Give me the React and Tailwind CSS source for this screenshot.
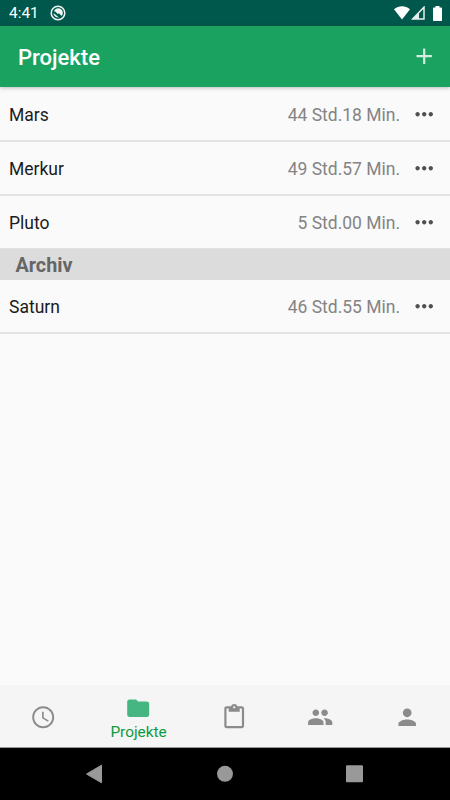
const ICONS = {
  clock:
    'M11.99 2C6.47 2 2 6.48 2 12s4.47 10 9.99 10C17.52 22 22 17.52 22 12S17.52 2 11.99 2zM12 20.200c-4.500 0-8.200-3.700-8.200-8.200s3.700-8.200 8.200-8.200 8.200 3.700 8.200 8.200-3.700 8.200-8.200 8.200zM12.500 7H11v6l5.250 3.150.75-1.230-4.500-2.670z',
  folder:
    'M10 4H4c-1.1 0-1.99.9-1.99 2L2 18c0 1.1.9 2 2 2h16c1.1 0 2-.9 2-2V8c0-1.1-.9-2-2-2h-8l-2-2z',
  clipboard:
    'M19 2h-4.18C14.4.84 13.3 0 12 0c-1.3 0-2.4.84-2.82 2H5c-1.1 0-2 .9-2 2v16c0 1.1.9 2 2 2h14c1.1 0 2-.9 2-2V4c0-1.1-.9-2-2-2zm-7 0c.55 0 1 .45 1 1s-.45 1-1 1-1-.45-1-1 .45-1 1-1zm7 18H5V4h2v3h10V4h2v16z',
  people:
    'M16 11c1.66 0 2.99-1.34 2.99-3S17.66 5 16 5c-1.66 0-3 1.34-3 3s1.34 3 3 3zm-8 0c1.66 0 2.99-1.34 2.99-3S9.66 5 8 5C6.34 5 5 6.34 5 8s1.34 3 3 3zm0 2c-2.33 0-7 1.17-7 3.5V19h14v-2.5c0-2.33-4.67-3.5-7-3.5zm8 0c-.29 0-.62.02-.97.05 1.16.84 1.97 1.97 1.97 3.45V19h6v-2.5c0-2.33-4.67-3.5-7-3.5z',
  person:
    'M12 12c2.21 0 4-1.79 4-4s-1.79-4-4-4-4 1.79-4 4 1.79 4 4 4zm0 2c-2.67 0-8 1.34-8 4v2h16v-2c0-2.66-5.33-4-8-4z',
  add: 'M19 13h-6v6h-2v-6H5v-2h6V5h2v6h6v2z',
  more: 'M6 10c-1.1 0-2 .9-2 2s.9 2 2 2 2-.9 2-2-.9-2-2-2zm12 0c-1.1 0-2 .9-2 2s.9 2 2 2 2-.9 2-2-.9-2-2-2zm-6 0c-1.1 0-2 .9-2 2s.9 2 2 2 2-.9 2-2-.9-2-2-2z',
}

const projects = [
  { name: 'Mars', time: '44 Std.18 Min.' },
  { name: 'Merkur', time: '49 Std.57 Min.' },
  { name: 'Pluto', time: '5 Std.00 Min.' },
]

const archived = [{ name: 'Saturn', time: '46 Std.55 Min.' }]

function Icon({ name, className = '' }) {
  return (
    <svg viewBox="0 0 24 24" fill="currentColor" className={`size-[26.4px] shrink-0 ${className}`}>
      <path d={ICONS[name]} />
    </svg>
  )
}

function StatusBar() {
  return (
    <div className="flex h-[26px] shrink-0 items-center bg-[#00574b] pr-[8px] pl-[9px] text-white">
      <span className="pt-[2px] text-[15.4px] leading-none">4:41</span>
      <svg viewBox="0 0 16 16" className="ml-[11.5px] size-4" fill="none">
        <circle cx="8" cy="8" r="6.8" stroke="#f2f7f6" strokeWidth="1.5" />
        <path d="M4 6.2A4.6 4.6 0 1 1 11.6 11L9.2 8.5 7.4 8.8 5.600 6.700z" fill="#f2f7f6" />
        <path d="M3.5 8.1 8.9 12.5A4.6 4.6 0 0 1 3.5 8.1z" fill="#f2f7f6" />
      </svg>
      <div className="ml-auto flex items-center">
        <svg viewBox="0 0 16 14" className="h-[14px] w-4" fill="#fff">
          <path d="M0 3.2C4.5-.7 11.5-.7 16 3.2L8 13.4z" />
        </svg>
        <svg viewBox="0 0 14 14" className="ml-[1px] h-[14px] w-[14px]">
          <path d="M1.6 13.1 13 1.2v11.9z" fill="none" stroke="#e5efed" strokeWidth="1.5" />
          <path d="M8 6.5V13H1.6z" fill="#e5efed" />
        </svg>
        <svg viewBox="0 0 9 15" className="ml-[8px] h-[15px] w-[9px]" fill="#fff">
          <path d="M2.5 0h4v1.5H8.2a.8.8 0 0 1 .8.8v11.9a.8.8 0 0 1-.8.8H.8a.8.8 0 0 1-.8-.8V2.3a.8.8 0 0 1 .8-.8h1.7z" />
        </svg>
      </div>
    </div>
  )
}

function ProjectRow({ name, time }) {
  return (
    <li className="flex h-[54px] items-center border-b-2 border-[#e2e2e2] pt-[3px] pr-[13px] pl-[9px] text-[17.5px]">
      <span className="text-[#1b1b1b]">{name}</span>
      <span className="ml-auto text-[#848484]">{time}</span>
      <Icon name="more" className="ml-[10.5px] -translate-y-px text-[#505050]" />
    </li>
  )
}

function TabItem({ icon }) {
  return (
    <div className="flex w-[86.4px] items-center justify-center text-[#8b8b8b]">
      <Icon name={icon} />
    </div>
  )
}

export default function App() {
  return (
    <div className="flex h-[800px] w-[450px] flex-col overflow-hidden bg-[#fafafa] font-['Roboto',sans-serif]">
      <StatusBar />
      <header className="z-10 flex h-[61px] shrink-0 items-center justify-between bg-[#1aa260] pr-[13px] pl-[18px] shadow-[0_1px_4px_rgba(0,0,0,0.25)]">
        <h1 className="pt-[2px] text-[22px] font-medium text-white">Projekte</h1>
        <Icon name="add" className="text-[#d2ecdf]" />
      </header>

      <main className="flex-1 pt-[1px]">
        <ul>
          {projects.map((p) => (
            <ProjectRow key={p.name} {...p} />
          ))}
        </ul>
        <h2 className="relative -mt-[1px] flex h-[31px] items-center bg-[#dcdcdc] pt-[2px] pl-[15.5px] text-[19.8px] font-bold text-[#666]">
          Archiv
        </h2>
        <ul>
          {archived.map((p) => (
            <ProjectRow key={p.name} {...p} />
          ))}
        </ul>
      </main>

      <nav className="flex h-[63px] shrink-0 border-b border-[#9a9a9a] bg-[#f5f5f5] pt-[2px]">
        <TabItem icon="clock" />
        <div className="flex w-[104.4px] flex-col items-center pt-[8px]">
          <Icon name="folder" className="text-[#45b581]" />
          <span className="pt-[1px] text-[15.4px] leading-[20px] text-[#109a40]">Projekte</span>
        </div>
        <TabItem icon="clipboard" />
        <TabItem icon="people" />
        <TabItem icon="person" />
      </nav>

      <div className="flex h-[52px] shrink-0 items-center bg-black">
        <svg viewBox="0 0 450 52" className="h-[52px] w-[450px]" fill="#999">
          <path d="M86.5 26 101.5 17.2v17.6z" stroke="#999" strokeLinejoin="round" />
          <circle cx="225" cy="25.8" r="8" />
          <rect x="346" y="17.2" width="17" height="17" rx="1" />
        </svg>
      </div>
    </div>
  )
}
